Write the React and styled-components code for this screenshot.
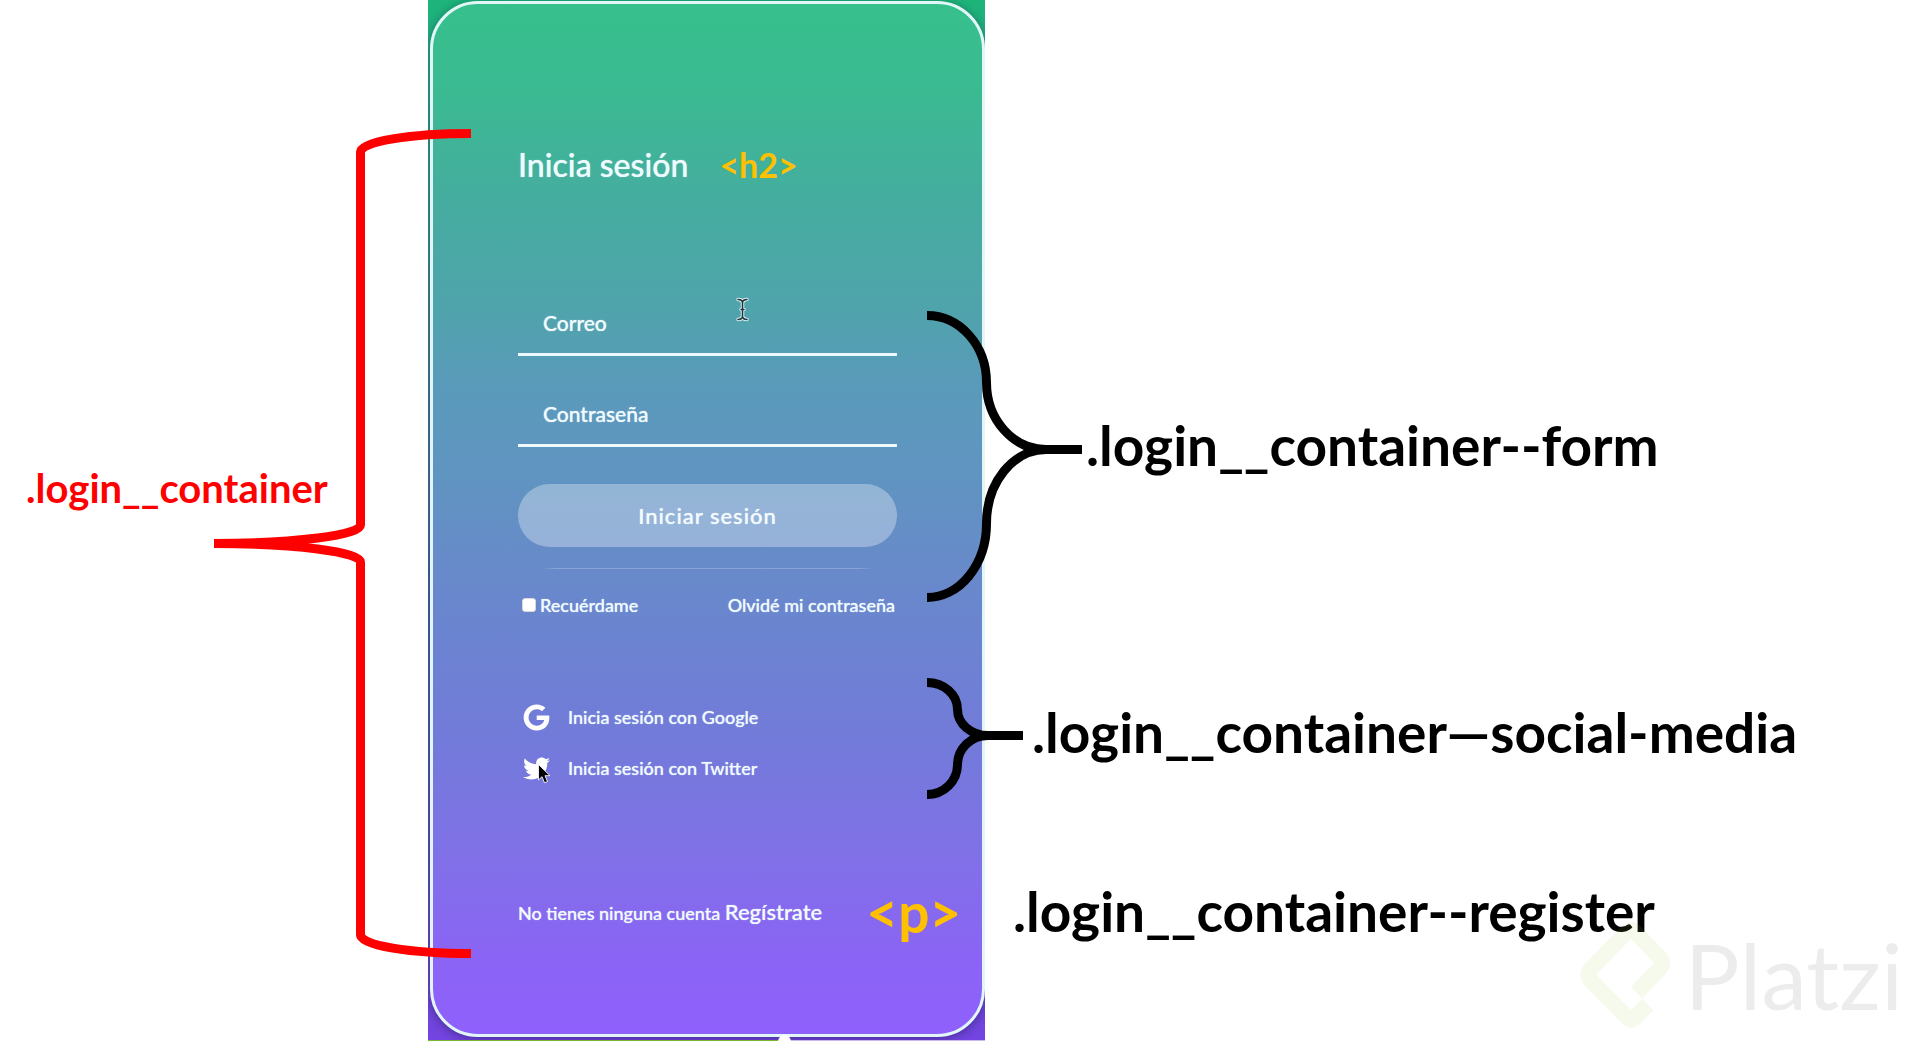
import React from "react";
import styled, { createGlobalStyle } from "styled-components";
import { FaGoogle, FaTwitter } from "react-icons/fa";

const GlobalStyle = createGlobalStyle`
  *, *::before, *::after { box-sizing: border-box; }
  body {
    margin: 0;
    background: #fff;
    font-family: Lato, "Noto Sans", sans-serif;
  }
  h2, p, ul { margin: 0; padding: 0; }
`;

const Page = styled.div`
  position: relative;
  display: grid;
  grid-template-columns: 428px 557px minmax(0, 1fr);
  min-height: 100vh;
  overflow: hidden;
`;

const LeftNotes = styled.aside`
  position: relative;
  z-index: 2;
  padding: 464px 0 0 26px;
`;

const RightNotes = styled.aside`
  position: relative;
  z-index: 2;
  padding-top: 298px;
`;

const Label = styled.span`
  display: block;
  padding-bottom: ${(p) => (p.$small ? 0 : 8)}px;
  font-weight: 700;
  font-size: ${(p) => (p.$small ? 40 : 55)}px;
  line-height: ${(p) => (p.$small ? 48 : 60)}px;
  color: ${(p) => (p.$small ? "#fe0000" : "#000")};
  white-space: nowrap;
`;

const Note = styled.div`
  display: flex;
  align-items: center;
  gap: ${(p) => p.$gap}px;
  margin: 0 0 ${(p) => p.$after}px ${(p) => p.$start}px;
`;

const Brace = styled.svg`
  flex: none;
  display: block;
  overflow: visible;
  fill: none;
  stroke: ${(p) => p.$color || "#000"};
  stroke-width: 9;
`;

const OuterBrace = styled(Brace)`
  position: absolute;
  left: 214px;
  top: 129px;
`;

const Stage = styled.main`
  position: relative;
  overflow: hidden;
  padding: 1px 0 4px 2px;
  background: linear-gradient(#1db47a 0%, #23a884 8%, #40848f 30%, #45669f 55%, #5551ac 80%, #7444e2 100%);
`;

const Card = styled.section`
  position: relative;
  height: 100%;
  padding: 141px 85px 90px;
  border: 3px solid #e2f6f8;
  border-radius: 48px;
  color: #f0fbff;
  background: linear-gradient(
    #36c08c 0%, #3bba92 9%, #45ad9f 19%, #50a3ac 30%, #5a9aba 37%,
    #6094c1 46%, #688aca 55%, #6b84d0 61%, #7479db 73%, #8170e8 83%, #8a64f4 92%, #9060fd 100%
  ) border-box;
  box-shadow: 0 2px 10px rgba(20, 20, 60, 0.45);
  text-shadow: 0 0 1px rgba(240, 251, 255, 0.8);
`;

const TitleRow = styled.div`
  display: flex;
  align-items: center;
  gap: 31px;
  margin-bottom: 106px;
`;

const Title = styled.h2`
  font-size: 32px;
  line-height: 40px;
  font-weight: 500;
`;

const Tag = styled.span`
  font-weight: 700;
  font-size: ${(p) => (p.$large ? 55 : 34)}px;
  line-height: 40px;
  color: #ffc000;
  text-shadow: none;
`;

const Form = styled.form`
  display: flex;
  flex-direction: column;
  margin-bottom: 86px;
`;

const Field = styled.input`
  width: 100%;
  height: 65px;
  margin-bottom: 26px;
  padding: 0 25px;
  border: 0;
  border-bottom: 3px solid #eef9ff;
  border-radius: 0;
  outline: 0;
  background: transparent;
  color: inherit;
  font: 500 21px/24px Lato, "Noto Sans", sans-serif;
  text-shadow: inherit;
  &::placeholder { color: #f0fbff; opacity: 1; }
`;

const Submit = styled.button`
  height: 63px;
  margin: 11px 0 21px;
  border: 0;
  border-radius: 32px;
  background: rgba(255, 255, 255, 0.32);
  color: #f4fbff;
  font: 500 22px/28px Lato, "Noto Sans", sans-serif;
  letter-spacing: 1px;
  text-shadow: inherit;
`;

const Divider = styled.hr`
  width: 100%;
  height: 1px;
  margin: 0 0 24px;
  border: 0;
  background: linear-gradient(90deg, transparent 6%, rgba(255, 255, 255, 0.22) 10%, rgba(255, 255, 255, 0.22) 90%, transparent 94%);
`;

const Options = styled.div`
  display: flex;
  justify-content: space-between;
  padding: 0 2px 0 4px;
  font-size: 18px;
  line-height: 24px;
  font-weight: 500;
`;

const Remember = styled.label`
  display: flex;
  align-items: center;
  gap: 4px;
`;

const Tick = styled.input`
  appearance: none;
  width: 14px;
  height: 14px;
  margin: 0;
  border: 1px solid #d8d8d8;
  border-radius: 3px;
  background: #fff;
`;

const TextLink = styled.a`
  color: inherit;
  text-decoration: none;
`;

const Social = styled.ul`
  display: grid;
  gap: 23px;
  margin-bottom: 100px;
  list-style: none;
`;

const SocialLink = styled(TextLink)`
  display: flex;
  align-items: center;
  gap: 18px;
  padding-left: 5px;
  font-size: 18px;
  line-height: 28px;
  font-weight: 500;
  svg { width: 27px; height: 27px; flex: none; color: #fff; }
`;

const RegisterRow = styled.div`
  display: flex;
  align-items: center;
  gap: 44px;
  height: 60px;
  white-space: nowrap;
`;

const Register = styled.p`
  font-size: 18px;
  line-height: 28px;
  font-weight: 500;
  a { font-size: 22px; }
`;

const Pointer = styled.svg`
  position: absolute;
  left: ${(p) => p.$x}px;
  top: ${(p) => p.$y}px;
  overflow: visible;
  pointer-events: none;
`;

const Progress = styled.div`
  position: absolute;
  left: 0;
  right: 0;
  bottom: 0;
  height: 1px;
  background: linear-gradient(90deg, #79b82e 64%, #c9b9ef 64%);
  &::after {
    content: "";
    position: absolute;
    left: 64%;
    top: -5px;
    width: 13px;
    height: 13px;
    margin-left: -6px;
    border-radius: 50%;
    background: #fff;
  }
`;

const Watermark = styled.div`
  position: absolute;
  z-index: 3;
  right: 16px;
  bottom: 12px;
  display: flex;
  align-items: center;
  gap: 14px;
  color: rgba(0, 0, 0, 0.075);
  font-size: 92px;
  line-height: 108px;
  pointer-events: none;
`;

export default function App() {
  return (
    <Page>
      <GlobalStyle />
      <LeftNotes>
        <Label $small>.login__container</Label>
        <OuterBrace $color="#fe0000" width="258" height="830" viewBox="0 0 258 830" aria-hidden="true">
          <path d="M257 4.5A110.5 18.5 0 0 0 146.500 23V396A146.500 18.500 0 0 1 0 414.500A146.500 18.500 0 0 1 146.500 433V806A110.500 18.500 0 0 0 257 824.500" />
        </OuterBrace>
      </LeftNotes>

      <Stage>
        <Card>
          <TitleRow>
            <Title>Inicia sesión</Title>
            <Tag>&lt;h2&gt;</Tag>
          </TitleRow>
          <Form onSubmit={(e) => e.preventDefault()}>
            <Field type="email" placeholder="Correo" aria-label="Correo" />
            <Field type="password" placeholder="Contraseña" aria-label="Contraseña" />
            <Submit type="submit">Iniciar sesión</Submit>
            <Divider />
            <Options>
              <Remember>
                <Tick type="checkbox" />
                Recuérdame
              </Remember>
              <TextLink href="#olvide">Olvidé mi contraseña</TextLink>
            </Options>
          </Form>
          <Social>
            <li>
              <SocialLink href="#google"><FaGoogle />Inicia sesión con Google</SocialLink>
            </li>
            <li>
              <SocialLink href="#twitter"><FaTwitter />Inicia sesión con Twitter</SocialLink>
            </li>
          </Social>
          <RegisterRow>
            <Register>
              No tienes ninguna cuenta <TextLink href="#registro">Regístrate</TextLink>
            </Register>
            <Tag $large>&lt;p&gt;</Tag>
          </RegisterRow>
          <Pointer $x={304} $y={294} width="11" height="23" viewBox="0 0 11 23" aria-hidden="true">
            <g fill="none" strokeLinecap="round">
              <path d="M1 1.500Q5.500 1.500 5.500 5V18Q5.500 21.500 1 21.500M10 1.500Q5.500 1.500 5.500 5M5.500 18Q5.500 21.500 10 21.500M4 11.500H7" stroke="#d5eef0" strokeWidth="3.500" />
              <path d="M1 1.500Q5.500 1.500 5.500 5V18Q5.500 21.500 1 21.500M10 1.500Q5.500 1.500 5.500 5M5.500 18Q5.500 21.500 10 21.500M4 11.500H7" stroke="#26363b" strokeWidth="1.500" />
            </g>
          </Pointer>
          <Pointer $x={105} $y={760} width="13" height="20" viewBox="0 0 13 20" aria-hidden="true">
            <path d="M.5.500V16L4 12.700L6.500 18.800L9.500 17.500L7 11.700H12Z" fill="#000" stroke="#e8e8f4" strokeWidth="1" />
          </Pointer>
        </Card>
        <Progress />
      </Stage>

      <RightNotes>
        <Note $start={-58} $gap={4} $after={73}>
          <Brace width="155" height="302" viewBox="0 0 155 302" aria-hidden="true">
            <path d="M0 17.500A59.500 67 0 0 1 59.500 84.500A59.500 67 0 0 0 119 151.500H155M119 151.500A59.500 74 0 0 0 59.500 225.500A59.500 74 0 0 1 0 299.500" />
          </Brace>
          <Label>.login__container--form</Label>
        </Note>
        <Note $start={-58} $gap={9} $after={82}>
          <Brace width="96" height="126" viewBox="0 0 96 126" aria-hidden="true">
            <path d="M0 9.500A30.500 27 0 0 1 30.500 36.500A30.500 26 0 0 0 61 62.500H96M61 62.500A30.500 29 0 0 0 30.500 91.500A30.500 30 0 0 1 0 121.500" />
          </Brace>
          <Label>.login__container—social-media</Label>
        </Note>
        <Note $start={28} $gap={0} $after={0}>
          <Label>.login__container--register</Label>
        </Note>
      </RightNotes>

      <Watermark>
        <svg width="91" height="108" viewBox="59 71 273 322" aria-hidden="true">
          <path
            fill="#a4d042"
            fillOpacity=".1"
            fillRule="evenodd"
            d="M185 85Q212 61 239 85L318 165Q342 195 318 225L246 303L279 338L238 379Q212 401 186 379L75 265Q45 231 75 197ZM212 123L108 231L212 337L246 303L212 267L281 195Z"
          />
        </svg>
        <span>Platzi</span>
      </Watermark>
    </Page>
  );
}
